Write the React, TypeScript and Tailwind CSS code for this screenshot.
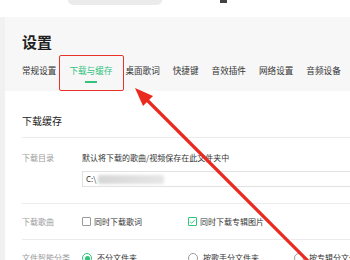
import React from 'react'

const tabs = ['常规设置', '下载与缓存', '桌面歌词', '快捷键', '音效插件', '网络设置', '音频设备']

function CheckBox({ checked }: { checked?: boolean }) {
  return (
    <span
      className={`flex h-[9px] w-[9px] shrink-0 items-center justify-center rounded-[1px] border ${
        checked ? 'border-[#31c27c]' : 'border-[#9a9a9a]'
      }`}
    >
      {checked && (
        <svg viewBox="0 0 10 10" className="h-[7px] w-[7px]">
          <path d="M1.5 5.2 L4 7.5 L8.5 2.5" fill="none" stroke="#31c27c" strokeWidth="1.3" />
        </svg>
      )}
    </span>
  )
}

function Radio({ checked }: { checked?: boolean }) {
  return (
    <span
      className={`flex h-[10px] w-[10px] shrink-0 items-center justify-center rounded-full border ${
        checked ? 'border-[#31c27c]' : 'border-[#9a9a9a]'
      }`}
    >
      {checked && <span className="h-[5px] w-[5px] rounded-full bg-[#31c27c]" />}
    </span>
  )
}

export default function App() {
  return (
    <div
      className="relative h-[260px] w-[350px] overflow-hidden bg-white"
      style={{ fontFamily: '"Noto Sans CJK SC", "Noto Sans", sans-serif' }}
    >
      {/* top bar */}
      <div className="relative h-[17px] bg-white">
        <div className="ml-[68px] h-[5px] w-[94px] rounded-b-[5px] bg-[#ebebeb]" />
        <div className="absolute left-[220px] top-0 h-[3px] w-[7px] bg-[#444]" />
      </div>

      <div className="flex">
        <div className="w-[5px] shrink-0 bg-[#f1f1f1]" />
        <div className="flex-1">
          {/* header */}
          <div className="h-[74px] bg-[#f7f7f7] pl-[17px] pt-[15px]">
            <div className="text-[15px] font-bold leading-[20px] text-[#1f1f1f]">设置</div>
            <div className="mt-[13px] flex gap-[13px] whitespace-nowrap">
              {tabs.map((t, i) => (
                <div key={t} className="flex flex-col items-center">
                  <span
                    className={`text-[8.6px] leading-[10px] ${
                      i === 1 ? 'text-[#31c27c]' : 'text-[#333]'
                    }`}
                  >
                    {t}
                  </span>
                  <span
                    className={`mt-[6px] h-[2px] w-[12px] ${i === 1 ? 'bg-[#31c27c]' : 'bg-transparent'}`}
                  />
                </div>
              ))}
            </div>
          </div>

          {/* content */}
          <div className="ml-[17px]">
            <div className="h-[47px] border-b border-[#ececec] pt-[23px] text-[10px] leading-[14px] text-[#222]">
              下载缓存
            </div>

            <div className="flex h-[66px] border-b border-[#ececec] pt-[15px] text-[8px] leading-[10px]">
              <div className="w-[60px] shrink-0 text-[#9a9a9a]">下载目录</div>
              <div className="flex-1">
                <div className="whitespace-nowrap text-[#333]">默认将下载的歌曲/视频保存在此文件夹中</div>
                <div className="mt-[8px] flex h-[16px] w-[300px] items-center border border-[#e2e2e2] pl-[3px]">
                  <span className="text-[#333]">C:\</span>
                  <span className="ml-[2px] h-[9px] w-[66px] rounded-[2px] bg-gradient-to-r from-[#d6d6d6] to-[#e6e6e6] blur-[1.5px]" />
                </div>
              </div>
            </div>

            <div className="flex h-[36px] items-center border-b border-[#ececec] text-[8px] leading-[10px]">
              <div className="w-[60px] shrink-0 text-[#9a9a9a]">下载歌曲</div>
              <div className="flex w-[106px] items-center gap-[3px] text-[#333]">
                <CheckBox />
                <span>同时下载歌词</span>
              </div>
              <div className="flex items-center gap-[3px] whitespace-nowrap text-[#333]">
                <CheckBox checked />
                <span>同时下载专辑图片</span>
              </div>
            </div>

            <div className="flex h-[36px] items-center whitespace-nowrap text-[8px] leading-[10px]">
              <div className="w-[60px] shrink-0 text-[#9a9a9a]">文件智能分类</div>
              <div className="flex w-[106px] items-center gap-[5px] text-[#333]">
                <Radio checked />
                <span>不分文件夹</span>
              </div>
              <div className="flex w-[106px] items-center gap-[5px] text-[#333]">
                <Radio />
                <span>按歌手分文件夹</span>
              </div>
              <div className="flex items-center gap-[5px] text-[#333]">
                <Radio />
                <span>按专辑分文件夹</span>
              </div>
            </div>
          </div>
        </div>
      </div>

      {/* annotation */}
      <div className="absolute left-[59px] top-[55px] h-[36px] w-[65px] rounded-[2px] border-[1.5px] border-[#e8322a]" />
      <svg className="absolute left-0 top-0" width="350" height="260" viewBox="0 0 350 260">
        <line x1="146" y1="99" x2="312" y2="265" stroke="#ea2a1f" strokeWidth="3.2" strokeLinecap="round" />
        <polygon points="135,88 143,106 153,96" fill="#ea2a1f" />
      </svg>
    </div>
  )
}
